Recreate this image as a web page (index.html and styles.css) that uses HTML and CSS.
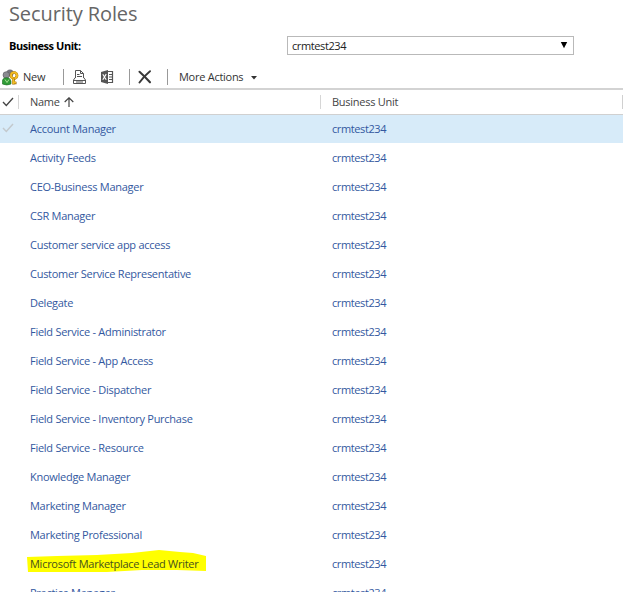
FILE: index.html
```html
<!DOCTYPE html>
<html lang="en">
<head>
<meta charset="utf-8">
<title>Security Roles</title>
<link rel="stylesheet" href="styles.css">
</head>
<body>
<h1 class="title">Security Roles</h1>
<div class="filter">
  <span class="filter-label">Business Unit:</span>
  <div class="select"><span>crmtest234</span><svg width="8" height="8" viewBox="0 0 8 8"><path d="M.8 1h6.4L4 7.3z"/></svg></div>
</div>
<div class="toolbar">
  <svg class="role-icon" width="17" height="17" viewBox="0 0 17 17">
    <circle cx="8" cy="4" r="3.6" fill="#77777f"/><circle cx="4.3" cy="6" r="3.3" fill="#8b8b91" stroke="#55555c" stroke-width=".6"/>
    <path d="M.4 15V11.5Q1 8.7 4.5 8.7T9 12v3Q5 17 .4 15z" fill="#2f9b36" stroke="#17691e" stroke-width=".6"/>
    <path d="M3 10.5l2 3 2-3" fill="none" stroke="#a6df92"/>
    <circle cx="12" cy="6.5" r="3" fill="none" stroke="#8e6208" stroke-width="2.7"/>
    <circle cx="12" cy="6.5" r="3" fill="none" stroke="#f2bb24" stroke-width="2"/>
    <path d="M11.5 9.5v6M12 14h2.5" stroke="#8e6208" stroke-width="2.6"/>
    <path d="M11.3 9.5v5.5M11.5 13.5H14" stroke="#f2bb24" stroke-width="1.8"/>
  </svg>
  <span class="new">New</span>
  <i class="sep"></i>
  <svg class="print-icon" width="15" height="14" viewBox="0 0 15 14" fill="none" stroke="#555">
    <path d="M3.5 8V.5h5l3 3V8M8.5 .5v3h3M5 4.5h2.5M5 6.5h5M3.3 7.5L1.5 10v3.5h12V10l-1.8-2.5M1.5 10.5h12M4 12h7"/>
  </svg>
  <svg class="excel-icon" width="13" height="14" viewBox="0 0 13 14">
    <path d="M0 2L7 0v14L0 12z" fill="#555"/><path d="M1.8 4.3l3.4 5.4M5.2 4.1L1.8 9.8" stroke="#fff" stroke-width="1.1"/>
    <path d="M7 1.5h4.5v11H7M8 4.5h3.5M8 7h3.5M8 9.5h3.5" fill="none" stroke="#555" stroke-width="1.2"/>
  </svg>
  <i class="sep sep-two"></i>
  <svg class="delete-icon" width="14" height="14" viewBox="0 0 14 14" fill="none" stroke="#383838" stroke-linecap="round"><path d="M1.5 1.8Q6.5 6.3 12 12.3" stroke-width="2.1"/><path d="M12 1.2Q6 6 1.5 12.5" stroke-width="1.9"/></svg>
  <i class="sep sep-three"></i>
  <span class="more">More Actions</span>
  <svg class="caret" width="6" height="4" viewBox="0 0 6 4"><path d="M0 0h6L3 3.5z" fill="#333"/></svg>
</div>
<div class="head">
  <svg class="check" width="12" height="10" viewBox="0 0 12 10" fill="none" stroke="#444" stroke-width="1.3"><path d="M1 5l3.3 3.5L11 1"/></svg>
  <div class="head-name"><span>Name</span><svg width="10" height="10" viewBox="0 0 10 10" fill="none" stroke="#444" stroke-width="1.2"><path d="M5 10V1M.7 5L5 .8 9.3 5"/></svg></div>
  <div class="head-unit">Business Unit</div>
  <i class="head-end"></i>
</div>
<div class="rows">
  <div class="row selected"><svg class="check" width="12" height="10" viewBox="0 0 12 10" fill="none" stroke="#c3c9cd" stroke-width="1.5"><path d="M1 5l3.3 3.5L11 1"/></svg><span class="name">Account Manager</span><span class="unit">crmtest234</span></div>
  <div class="row"><span class="name">Activity Feeds</span><span class="unit">crmtest234</span></div>
  <div class="row"><span class="name">CEO-Business Manager</span><span class="unit">crmtest234</span></div>
  <div class="row"><span class="name">CSR Manager</span><span class="unit">crmtest234</span></div>
  <div class="row"><span class="name">Customer service app access</span><span class="unit">crmtest234</span></div>
  <div class="row"><span class="name">Customer Service Representative</span><span class="unit">crmtest234</span></div>
  <div class="row"><span class="name">Delegate</span><span class="unit">crmtest234</span></div>
  <div class="row"><span class="name">Field Service - Administrator</span><span class="unit">crmtest234</span></div>
  <div class="row"><span class="name">Field Service - App Access</span><span class="unit">crmtest234</span></div>
  <div class="row"><span class="name">Field Service - Dispatcher</span><span class="unit">crmtest234</span></div>
  <div class="row"><span class="name">Field Service - Inventory Purchase</span><span class="unit">crmtest234</span></div>
  <div class="row"><span class="name">Field Service - Resource</span><span class="unit">crmtest234</span></div>
  <div class="row"><span class="name">Knowledge Manager</span><span class="unit">crmtest234</span></div>
  <div class="row"><span class="name">Marketing Manager</span><span class="unit">crmtest234</span></div>
  <div class="row"><span class="name">Marketing Professional</span><span class="unit">crmtest234</span></div>
  <div class="row"><svg class="marker" width="180" height="24" viewBox="0 0 180 24"><path d="M0 7L30 6 70 5 105 3 132 0 153 2 166 3 179 6V21L150 20H115L80 22H1z" fill="#ff0"/></svg><span class="name marked">Microsoft Marketplace Lead Writer</span><span class="unit">crmtest234</span></div>
  <div class="row"><span class="name">Practice Manager</span><span class="unit">crmtest234</span></div>
</div>
</body>
</html>
```
FILE: styles.css
```css
* { box-sizing: border-box; }
body {
  margin: 0;
  height: 592px;
  overflow: hidden;
  background: #fff;
  color: #333;
  font: 11px/16px "Open Sans", "Noto Sans", sans-serif;
  letter-spacing: -.27px;
}
svg { display: block; flex: none; }
.title {
  margin: 0;
  height: 36px;
  padding-left: 9px;
  color: #666;
  font-size: 20px;
  font-weight: 400;
  line-height: 28px;
  letter-spacing: -.1px;
}
.filter { display: flex; height: 19px; align-items: center; padding-left: 9px; }
.filter-label { width: 278px; color: #000; font-weight: 700; letter-spacing: -.44px; }
.select {
  display: flex;
  align-items: center;
  justify-content: space-between;
  width: 287px;
  height: 19px;
  padding: 0 5px 0 4px;
  border: 1px solid #b9b9b9;
  color: #222;
  letter-spacing: -.4px;
}
.select svg { margin-top: -2px; }
.toolbar {
  display: flex;
  align-items: center;
  height: 35px;
  padding: 11px 0 0 2px;
  border-bottom: 2px solid #d3d3d3;
}
.new { width: 40px; margin-left: 4px; }
.sep { flex: none; width: 1px; height: 16px; background: #999; }
.print-icon { margin-left: 8px; }
.excel-icon { margin-left: 14px; }
.sep-two { margin-left: 15px; }
.delete-icon { margin-left: 8px; }
.sep-three { margin-left: 15px; }
.more { width: 72px; margin-left: 11px; white-space: nowrap; }
.caret { margin-top: 1px; }
.head {
  display: flex;
  align-items: center;
  height: 25px;
  border-bottom: 1px solid #d0d0d0;
  color: #444;
}
.check { width: 12px; margin: 0 4px 0 2px; }
.head-name {
  display: flex;
  align-items: center;
  gap: 4px;
  width: 302px;
  height: 14px;
  padding-left: 11px;
  border-left: 1px solid #d6d6d6;
}
.head .head-unit { width: 302px; height: 14px; padding-left: 11px; border-left: 1px solid #d6d6d6; line-height: 14px; }
.head-end { width: 1px; height: 14px; margin-left: auto; background: #d0d0d0; }
.row {
  position: relative;
  display: grid;
  grid-template-columns: 302px 1fr;
  align-items: center;
  height: 29px;
  padding-left: 30px;
  color: #3358a0;
}
.selected { height: 28px; background: #d7ebf9; }
.row .check { position: absolute; left: 0; top: 8px; }
.marker { position: absolute; left: 27px; top: 1px; }
.row span { position: relative; white-space: nowrap; }
.unit { letter-spacing: -.4px; }
.row .marked { color: #46511c; }
```
